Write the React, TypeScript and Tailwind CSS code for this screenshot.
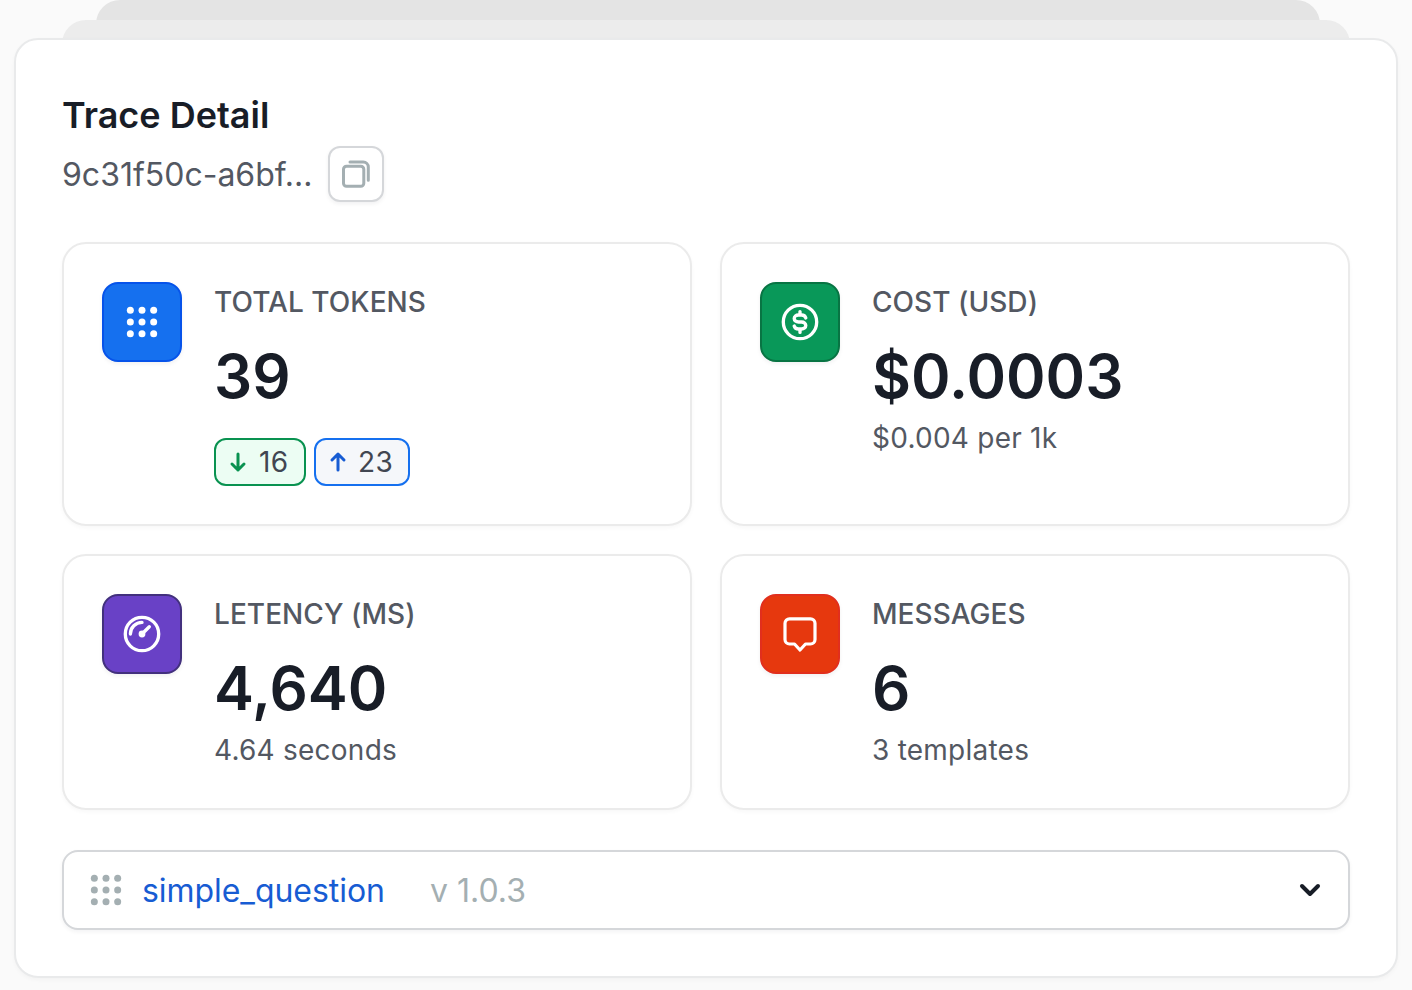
import React from 'react';

interface StatCardProps {
  label: string;
  value: string;
  caption?: string;
  tileClass: string;
  icon: React.ReactNode;
  children?: React.ReactNode;
}

const GridDots: React.FC<{ className?: string }> = ({ className }) => (
  <svg width="40" height="40" viewBox="0 0 40 40" fill="currentColor" className={className}>
    {[8.33, 20, 31.67].map((y) =>
      [8.33, 20, 31.67].map((x) => <circle key={`${x}-${y}`} cx={x} cy={y} r="3.5" />)
    )}
  </svg>
);

const DollarIcon = () => (
  <svg width="40" height="40" viewBox="0 0 40 40" fill="none" stroke="white" strokeWidth="3.33" strokeLinecap="round">
    <circle cx="20" cy="20" r="16.7" />
    <path d="M25.8 16c-.5-1.900-2.200-3-4.300-3h-3c-2.500 0-4.300 1.500-4.300 3.500s1.800 3.500 4.300 3.500h3c2.500 0 4.300 1.500 4.300 3.500s-1.800 3.500-4.300 3.500h-3c-2.100 0-3.800-1.100-4.300-3" />
    <path d="M20 9.600v3M20 27.400v3" />
  </svg>
);

const GaugeIcon = () => (
  <svg width="40" height="40" viewBox="0 0 40 40" fill="none" stroke="white" strokeWidth="3.33" strokeLinecap="round">
    <circle cx="20" cy="20" r="16.7" />
    <path d="M8.400 20A11.600 11.600 0 0 1 20 8.400" />
    <path d="M20.500 19.500l6.800-6.800" />
    <circle cx="20" cy="20" r="3.4" fill="white" stroke="none" />
  </svg>
);

const MessageIcon = () => (
  <svg width="40" height="40" viewBox="0 0 40 40" fill="none" stroke="white" strokeWidth="3.2" strokeLinejoin="round">
    <path d="M9.500 4.800h21a4.500 4.500 0 0 1 4.500 4.500v16.200a4.500 4.500 0 0 1-4.500 4.500h-5L20 36l-5.500-6h-5a4.500 4.500 0 0 1-4.500-4.500V9.300a4.500 4.500 0 0 1 4.500-4.500z" />
  </svg>
);

const ArrowIcon: React.FC<{ className?: string }> = ({ className }) => (
  <svg
    width="20"
    height="24"
    viewBox="0 0 20 24"
    fill="none"
    stroke="currentColor"
    strokeWidth="3"
    strokeLinecap="round"
    strokeLinejoin="round"
    className={className}
  >
    <path d="M10 4v16M4 14l6 6 6-6" />
  </svg>
);

const StatCard: React.FC<StatCardProps> = ({ label, value, caption, tileClass, icon, children }) => (
  <div className="flex gap-8 rounded-3xl border-2 border-[#ebebeb] bg-white p-[38px] shadow-[0_2px_4px_rgba(20,20,40,0.03)]">
    <div className={`flex size-20 shrink-0 items-center justify-center rounded-2xl border-2 shadow-[0_2px_4px_rgba(20,20,40,0.06)] ${tileClass}`}>
      {icon}
    </div>
    <div className="text-[28px] text-[#535862]">
      <div className="h-10 font-medium leading-10 tracking-[0.05px]">{label}</div>
      <div className="mt-4 text-[60px] font-semibold leading-[76px] text-[#181d27]">{value}</div>
      {caption && <div className="mt-1 leading-10 tracking-[0.24px]">{caption}</div>}
      {children}
    </div>
  </div>
);

export default function App() {
  return (
    <div className="flex h-[990px] w-[1412px] flex-col overflow-hidden bg-[#fafafa] font-['Inter',sans-serif]">
      {/* Stacked sheets behind the panel */}
      <div className="-mb-3 ml-24 h-8 w-[1224px] shrink-0 rounded-t-3xl bg-[#e4e4e4]" />
      <div className="-mb-8 ml-[62px] h-[50px] w-[1288px] shrink-0 rounded-t-3xl bg-[#ececec]" />

      <main className="ml-[14px] h-[940px] w-[1384px] shrink-0 rounded-3xl border-2 border-[#e9eaeb] bg-white px-[46px] pt-[49px] shadow-[0_2px_4px_rgba(20,20,40,0.03)]">
        <h1 className="h-[52px] text-[36px] font-semibold leading-[52px] text-[#181d27]">Trace Detail</h1>
        <div className="mt-[5px] flex h-14 items-center">
          <span className="w-[266px] pt-0.5 text-[32px] text-[#535862]">9c31f50c-a6bf...</span>
          <button className="flex size-14 items-center justify-center rounded-xl border-2 border-[#d5d7da] bg-white shadow-[0_2px_4px_rgba(20,20,40,0.06)]">
            <svg width="32" height="32" viewBox="0 0 32 32" fill="none" stroke="#a4afb2" strokeWidth="3" strokeLinecap="round">
              <rect x="3.500" y="8.200" width="20.300" height="20" rx="3" />
              <path d="M10 4h13.300a5 5 0 0 1 5 5v13.300" />
            </svg>
          </button>
        </div>

        {/* Metrics */}
        <section className="mt-10 grid grid-cols-2 gap-7">
          <StatCard label="TOTAL TOKENS" value="39" tileClass="border-[#0653ea] bg-[#1570ef]" icon={<GridDots className="text-white" />}>
            <div className="mt-6 flex gap-2 tracking-[0.4px] text-[#414651]">
              <span className="flex h-12 w-[92px] items-center rounded-xl border-2 border-[#099250] bg-[#ecfdf3] pl-3">
                <ArrowIcon className="text-[#099250]" />
                <span className="ml-[11px]">16</span>
              </span>
              <span className="flex h-12 w-24 items-center rounded-xl border-2 border-[#1570ef] bg-[#f5f7fa] pl-3">
                <ArrowIcon className="rotate-180 text-[#175cd3]" />
                <span className="ml-2.5">23</span>
              </span>
            </div>
          </StatCard>
          <StatCard label="COST (USD)" value="$0.0003" caption="$0.004 per 1k" tileClass="border-[#087443] bg-[#099859]" icon={<DollarIcon />} />
          <StatCard label="LETENCY (MS)" value="4,640" caption="4.64 seconds" tileClass="border-[#42307d] bg-[#6941c6]" icon={<GaugeIcon />} />
          <StatCard label="MESSAGES" value="6" caption="3 templates" tileClass="border-[#e12f1d] bg-[#e6380e]" icon={<MessageIcon />} />
        </section>

        {/* Template picker */}
        <div className="mt-10 flex h-20 items-center rounded-2xl border-2 border-[#d5d7da] bg-white pl-[22px] pr-[18px] text-[32px] shadow-[0_2px_4px_rgba(20,20,40,0.05)]">
          <GridDots className="text-[#a4afb2]" />
          <span className="ml-4 w-[288px] pt-0.5 tracking-[-0.05px] text-[#175cd3]">simple_question</span>
          <span className="pt-0.5 text-[#a4afb2]">v 1.0.3</span>
          <svg
            width="40"
            height="40"
            viewBox="0 0 40 40"
            fill="none"
            stroke="#181d27"
            strokeWidth="4"
            strokeLinecap="round"
            strokeLinejoin="round"
            className="ml-auto"
          >
            <path d="M12 16l8 8 8-8" />
          </svg>
        </div>
      </main>
    </div>
  );
}
